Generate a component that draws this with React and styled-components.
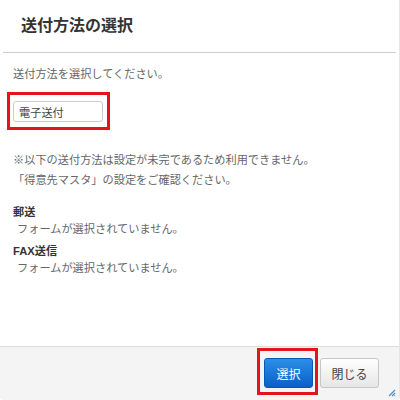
import React from 'react';
import styled, { createGlobalStyle } from 'styled-components';

const GlobalStyle = createGlobalStyle`
  html, body {
    margin: 0;
    padding: 0;
    background: #ffffff;
  }
  body {
    font-family: "Liberation Sans", "Noto Sans CJK JP", sans-serif;
    color: #666;
  }
`;

const methods = [
  { name: '郵送', message: 'フォームが選択されていません。' },
  { name: 'FAX送信', message: 'フォームが選択されていません。' },
];

const App = () => {
  return (
    <>
      <GlobalStyle />
      <Dialog>
        <Header>
          <Title>送付方法の選択</Title>
        </Header>
        <Body>
          <Lead>送付方法を選択してください。</Lead>
          <Highlight $pad="6px 4px 5px 3px" $shift="-6px">
            <Select>電子送付</Select>
          </Highlight>
          <Notice>
            <p>※以下の送付方法は設定が未完であるため利用できません。</p>
            <p>「得意先マスタ」の設定をご確認ください。</p>
          </Notice>
          <MethodList>
            {methods.map((it) => (
              <Method key={it.name}>
                <MethodName>{it.name}</MethodName>
                <MethodMessage>{it.message}</MethodMessage>
              </Method>
            ))}
          </MethodList>
        </Body>
        <Footer>
          <Highlight $pad="7px 2px 4px 4px">
            <PrimaryBtn>選択</PrimaryBtn>
          </Highlight>
          <Btn>閉じる</Btn>
          <Grip width="8" height="8" viewBox="0 0 8 8">
            <path d="M7 1 L1 7 M7 4 L4 7 M7 6.5 L6.5 7" stroke="#4f8fc0" strokeWidth="1.2" />
          </Grip>
        </Footer>
      </Dialog>
    </>
  );
};

export default App;

const Dialog = styled.div`
  position: relative;
  width: 400px;
  height: 400px;
  box-sizing: border-box;
  border-right: 1px solid #e6e6e6;
  border-radius: 0 0 4px 4px;
  display: flex;
  flex-direction: column;
  overflow: hidden;
  background: #fff;
`;

const Header = styled.div`
  height: 52px;
  margin: 0 3px;
  padding-left: 18px;
  display: flex;
  align-items: center;
  border-bottom: 1px solid #cfcfcf;
  flex-shrink: 0;
`;

const Title = styled.h1`
  margin: 0;
  font-size: 16px;
  font-weight: bold;
  color: #333;
  line-height: 1;
`;

const Body = styled.div`
  flex: 1;
  padding: 12px 13px 0;
  font-size: 11.2px;
`;

const Lead = styled.p`
  margin: 0;
  line-height: 18px;
`;

const Highlight = styled.div`
  display: inline-flex;
  align-self: flex-start;
  border: 3px solid #e3141d;
  padding: ${(p) => p.$pad};
  margin-left: ${(p) => p.$shift || '0'};
  margin-top: ${(p) => (p.$shift ? '9px' : '1px')};
`;

const Select = styled.div`
  width: 90px;
  height: 21px;
  box-sizing: border-box;
  border: 1px solid #cccccc;
  border-radius: 3px;
  padding-left: 5px;
  display: flex;
  align-items: center;
  color: #444;
  font-size: 11.2px;
  background: #fff;
`;

const Notice = styled.div`
  margin-top: 20px;
  p {
    margin: 0;
    line-height: 20px;
  }
`;

const MethodList = styled.div`
  margin-top: 14px;
  display: flex;
  flex-direction: column;
  gap: 5px;
`;

const Method = styled.div`
  line-height: 17px;
`;

const MethodName = styled.div`
  font-weight: bold;
  color: #333;
`;

const MethodMessage = styled.div`
  padding-left: 4px;
`;

const Footer = styled.div`
  height: 53px;
  flex-shrink: 0;
  border-top: 1px solid #dcdcdc;
  background: #f4f4f4;
  display: flex;
  justify-content: flex-end;
  align-items: flex-start;
  padding-right: 20px;
`;

const BaseBtn = styled.button`
  height: 30px;
  border-radius: 3px;
  font-family: "Liberation Sans", "Noto Sans CJK JP", sans-serif;
  font-size: 12px;
  padding: 0;
  cursor: pointer;
`;

const PrimaryBtn = styled(BaseBtn)`
  width: 49px;
  color: #fff;
  border: 1px solid #0b57b5;
  background: linear-gradient(#2b8fe8, #0a5fc7);
`;

const Btn = styled(BaseBtn)`
  width: 59px;
  margin: 11px 0 0 2px;
  color: #444;
  border: 1px solid #c6c6c6;
  background: linear-gradient(#ffffff, #e6e6e6);
`;

const Grip = styled.svg`
  position: absolute;
  right: 3px;
  bottom: 3px;
`;
